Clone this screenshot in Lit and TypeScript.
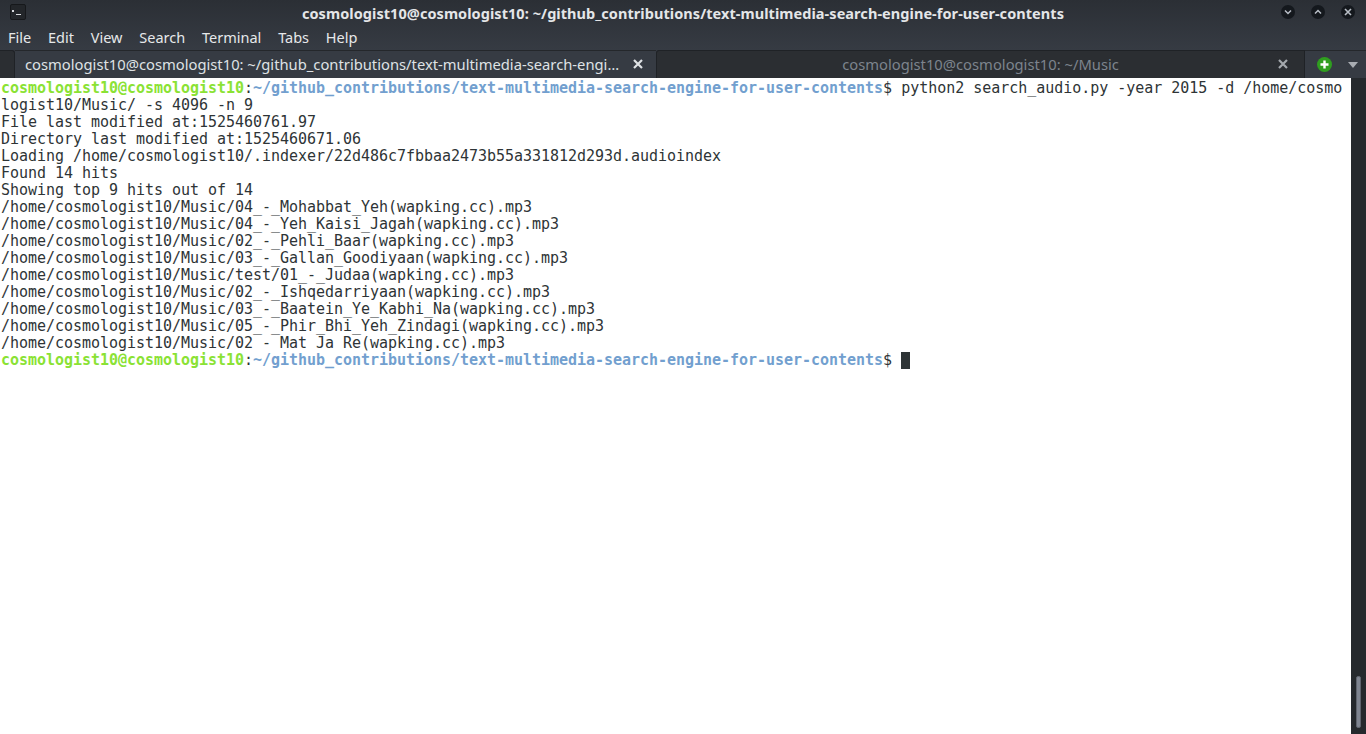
import { LitElement, html, css, svg } from "lit";
import { customElement } from "lit/decorators.js";

const PATH = "~/github_contributions/text-multimedia-search-engine-for-user-contents";
const USER = "cosmologist10@cosmologist10";
const OUTPUT = [
  "logist10/Music/ -s 4096 -n 9",
  "File last modified at:1525460761.97",
  "Directory last modified at:1525460671.06",
  "Loading /home/cosmologist10/.indexer/22d486c7fbbaa2473b55a331812d293d.audioindex",
  "Found 14 hits",
  "Showing top 9 hits out of 14",
  "/home/cosmologist10/Music/04_-_Mohabbat_Yeh(wapking.cc).mp3",
  "/home/cosmologist10/Music/04_-_Yeh_Kaisi_Jagah(wapking.cc).mp3",
  "/home/cosmologist10/Music/02_-_Pehli_Baar(wapking.cc).mp3",
  "/home/cosmologist10/Music/03_-_Gallan_Goodiyaan(wapking.cc).mp3",
  "/home/cosmologist10/Music/test/01_-_Judaa(wapking.cc).mp3",
  "/home/cosmologist10/Music/02_-_Ishqedarriyaan(wapking.cc).mp3",
  "/home/cosmologist10/Music/03_-_Baatein_Ye_Kabhi_Na(wapking.cc).mp3",
  "/home/cosmologist10/Music/05_-_Phir_Bhi_Yeh_Zindagi(wapking.cc).mp3",
  "/home/cosmologist10/Music/02 - Mat Ja Re(wapking.cc).mp3",
];
const MENUS = ["File", "Edit", "View", "Search", "Terminal", "Tabs", "Help"];

const closeX = svg`<svg class="tabx" width="10" height="10" viewBox="0 0 10 10"><path d="M1 1 L9 9 M9 1 L1 9" stroke="currentColor" stroke-width="2.2" fill="none"/></svg>`;

@customElement("app-root")
export class AppRoot extends LitElement {
  static styles = css`
    :host { display: flex; flex-direction: column; width: 1366px; height: 734px; overflow: hidden; background: #fff; }
    .chrome { background: linear-gradient(#2b2f35, #363b43 50px); color: #e8eaec; font-family: "Noto Sans", "Open Sans", sans-serif; }
    .title { height: 26px; display: flex; align-items: center; position: relative; justify-content: center; }
    .title b { font-size: 14.5px; font-weight: 700; color: #e4e6e8; letter-spacing: 0.06px; }
    .appicon { position: absolute; left: 10px; top: 4px; width: 16px; height: 16px; background: #23262a; border: 1px solid #16181b; border-radius: 2px; box-sizing: border-box; }
    .wb { position: absolute; right: 11px; top: 5px; display: flex; gap: 16px; }
    .wb span { width: 14px; height: 14px; border-radius: 50%; background: #14181d; display: flex; align-items: center; justify-content: center; color: #b8bec6; }
    .menu { height: 24px; display: flex; align-items: center; padding: 0 0 2px 8px; box-sizing: border-box; gap: 16.8px; font-size: 14.5px; color: #e6e8ea; }
    .tabs { height: 28px; display: flex; box-sizing: border-box; font-size: 14.75px; }
    .stub { width: 15px; background: #2b2e32; border-top: 1px solid #1f2226; border-right: 1px solid #1f2226; border-top-right-radius: 3px; box-sizing: border-box; }
    .tab { display: flex; align-items: center; box-sizing: border-box; }
    .tab.on { width: 641px; padding: 0 13px 2px 10px; justify-content: space-between; color: #dfe2e5; background: #363b43; border-top: 1px solid #24272b; }
    .tab.off { width: 649px; padding-bottom: 2px; justify-content: center; color: #7d848d; background: #2b2e32; border: 1px solid #1f2226; border-bottom: none; border-top-left-radius: 3px; position: relative; }
    .tab.off .tabx { position: absolute; right: 16px; top: 8px; color: #a4a8ad; }
    .tail { flex: 1; display: flex; align-items: center; background: #363b43; border-top: 1px solid #24272b; padding-left: 12px; gap: 16px; box-sizing: border-box; }
    .body { flex: 1; display: flex; min-height: 0; }
    .term { flex: 1; padding: 2px 0 0 1px; font: 15px/17px "DejaVu Sans Mono", monospace; letter-spacing: -0.03px; color: #2e3436; overflow: hidden; background: #fff; }
    .line { height: 17px; white-space: pre; }
    .u { color: #8ae234; font-weight: 700; }
    .p { color: #729fcf; font-weight: 700; }
    .cursor { display: inline-block; width: 9px; height: 17px; background: #2e3436; vertical-align: top; }
    .sb { width: 15px; background: #25292d; display: flex; flex-direction: column; justify-content: flex-end; align-items: center; padding-bottom: 6px; box-sizing: border-box; }
    .thumb { width: 5px; height: 52px; background: #7f8591; border-radius: 2px; border: 1px solid #5f646e; box-sizing: border-box; }
  `;

  private prompt() {
    return html`<span class="u">${USER}</span>:<span class="p">${PATH}</span>$ `;
  }

  render() {
    return html`
      <div class="chrome">
        <div class="title">
          <div class="appicon">
            <svg width="14" height="14" viewBox="0 0 14 14"><rect x="1" y="2" width="2" height="2" fill="#d8dade"/><rect x="5" y="6" width="5" height="1" fill="#d8dade"/></svg>
          </div>
          <b>${USER}: ${PATH}</b>
          <div class="wb">
            <span><svg width="8" height="8" viewBox="0 0 8 8"><path d="M1 2.5 L4 5.5 L7 2.5" stroke="currentColor" stroke-width="1.5" fill="none"/></svg></span>
            <span><svg width="8" height="8" viewBox="0 0 8 8"><path d="M1 5.5 L4 2.5 L7 5.5" stroke="currentColor" stroke-width="1.5" fill="none"/></svg></span>
            <span><svg width="8" height="8" viewBox="0 0 8 8"><path d="M1 1 L7 7 M7 1 L1 7" stroke="currentColor" stroke-width="1.6" fill="none"/></svg></span>
          </div>
        </div>
        <div class="menu">${MENUS.map((m) => html`<span>${m}</span>`)}</div>
        <div class="tabs">
          <div class="stub"></div>
          <div class="tab on"><span>${USER}: ~/github_contributions/text-multimedia-search-engi…</span>${closeX}</div>
          <div class="tab off"><span>${USER}: ~/Music</span>${closeX}</div>
          <div class="tail">
            <svg width="15" height="15" viewBox="0 0 15 15"><circle cx="7.5" cy="7.5" r="7.5" fill="#2f9e1f"/><path d="M7.5 3.5 V11.5 M3.5 7.5 H11.5" stroke="#fff" stroke-width="2.4"/></svg>
            <svg width="10" height="6" viewBox="0 0 10 6"><path d="M0 0 H10 L5 6 Z" fill="#a8acb2"/></svg>
          </div>
        </div>
      </div>
      <div class="body">
        <div class="term">
          <div class="line">${this.prompt()}python2 search_audio.py -year 2015 -d /home/cosmo</div>
          ${OUTPUT.map((l) => html`<div class="line">${l}</div>`)}
          <div class="line">${this.prompt()}<span class="cursor"></span></div>
        </div>
        <div class="sb"><div class="thumb"></div></div>
      </div>
    `;
  }
}
